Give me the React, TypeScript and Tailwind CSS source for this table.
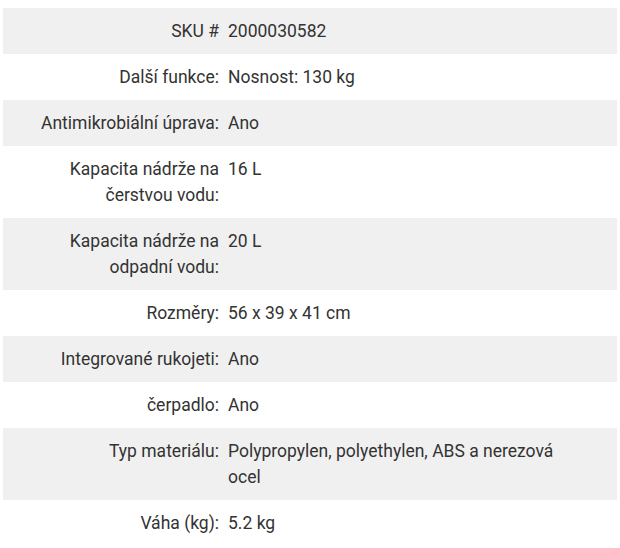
const ROWS = [
  { label: 'SKU #', value: '2000030582' },
  { label: 'Další funkce:', value: 'Nosnost: 130 kg' },
  { label: 'Antimikrobiální úprava:', value: 'Ano' },
  { label: 'Kapacita nádrže na čerstvou vodu:', value: '16 L' },
  { label: 'Kapacita nádrže na odpadní vodu:', value: '20 L' },
  { label: 'Rozměry:', value: '56 x 39 x 41 cm' },
  { label: 'Integrované rukojeti:', value: 'Ano' },
  { label: 'čerpadlo:', value: 'Ano' },
  { label: 'Typ materiálu:', value: 'Polypropylen, polyethylen, ABS a nerezová ocel' },
  { label: 'Váha (kg):', value: '5.2 kg' },
];

export default function App() {
  return (
    <div className="min-h-screen bg-white pt-[8px] pl-[3px] pr-[3px] font-['Roboto',sans-serif] text-[17.5px] leading-[26px] text-[#333333]">
      <div className="flex flex-col">
        {ROWS.map((row, i) => (
          <div key={i} className={`grid grid-cols-[225px_1fr] ${i % 2 === 0 ? 'bg-[#f0f0f0]' : 'bg-white'}`}>
            <div className="py-[10px] pl-[10px] pr-[9px] text-right">{row.label}</div>
            <div className="py-[10px] pr-[40px]">{row.value}</div>
          </div>
        ))}
      </div>
    </div>
  );
}
